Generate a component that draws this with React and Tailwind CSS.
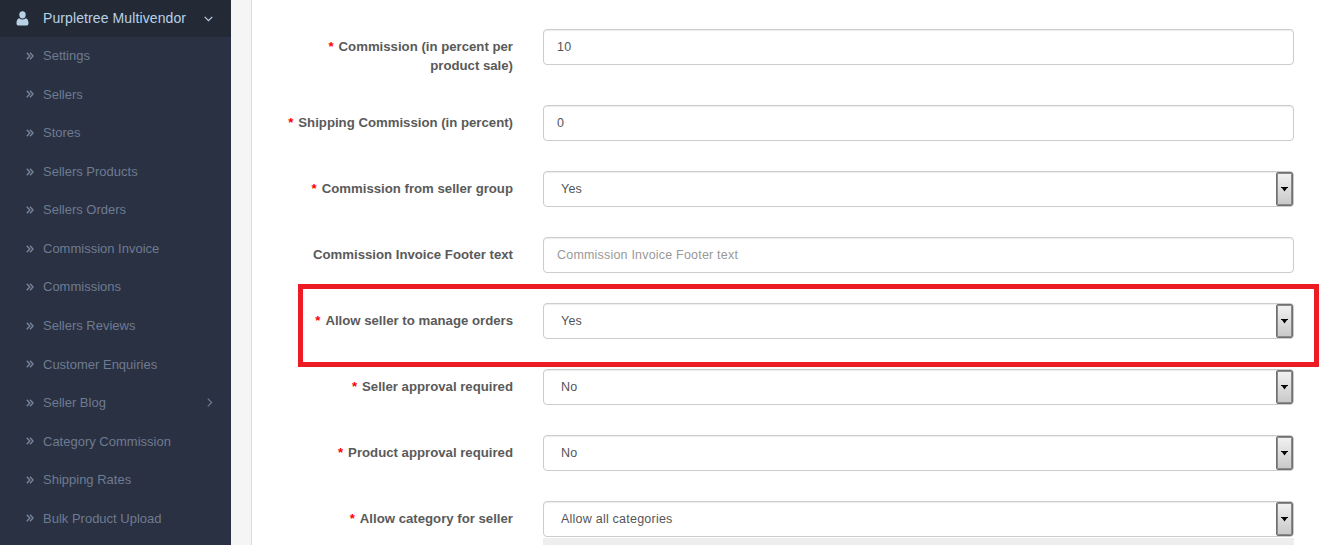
const menuItems = [
  'Settings',
  'Sellers',
  'Stores',
  'Sellers Products',
  'Sellers Orders',
  'Commission Invoice',
  'Commissions',
  'Sellers Reviews',
  'Customer Enquiries',
  'Seller Blog',
  'Category Commission',
  'Shipping Rates',
  'Bulk Product Upload',
];

function UserIcon() {
  return (
    <svg width="13" height="15" viewBox="0 0 13 15" className="text-[#b9d2e6]" fill="currentColor">
      <ellipse cx="6.5" cy="3.8" rx="3.2" ry="3.6" />
      <path d="M0.5 12.2C0.5 9.4 1.6 7.6 3.3 7.2C4.2 8 5.3 8.4 6.5 8.4C7.7 8.4 8.8 8 9.7 7.2C11.4 7.6 12.5 9.4 12.5 12.2C12.5 13.7 11.6 14.5 10.4 14.5H2.6C1.4 14.5 0.5 13.7 0.5 12.2Z" />
    </svg>
  );
}

function DoubleAngle() {
  return (
    <svg width="8" height="8" viewBox="0 0 8 8" fill="none" stroke="#76849b" strokeWidth="1.4" className="shrink-0">
      <path d="M0.8 0.8L3.8 4L0.8 7.2" />
      <path d="M4 0.8L7 4L4 7.2" />
    </svg>
  );
}

function Sidebar() {
  return (
    <aside className="w-[231px] shrink-0 bg-[#2a3142]">
      <div className="h-[37px] bg-[#232a36] flex items-center pl-[16px] text-[14px] tracking-[0.1px] text-[#b9d2e6]">
        <UserIcon />
        <span className="ml-[14px]">Purpletree Multivendor</span>
        <svg width="9" height="6" viewBox="0 0 9 6" fill="none" stroke="#b9d2e6" strokeWidth="1.2" className="ml-[18px]">
          <path d="M0.7 0.8L4.5 4.6L8.3 0.8" />
        </svg>
      </div>
      <ul className="-mt-[0.4px]">
        {menuItems.map((item) => (
          <li key={item} className="h-[38.55px] flex items-center pl-[26px] pr-[18px] text-[13px] text-[#6e7b91]">
            <DoubleAngle />
            <span className="ml-[9px] flex-1">{item}</span>
            {item === 'Seller Blog' && (
              <svg width="6" height="9" viewBox="0 0 6 9" fill="none" stroke="#6e7b91" strokeWidth="1.2">
                <path d="M0.8 0.7L4.6 4.5L0.8 8.3" />
              </svg>
            )}
          </li>
        ))}
      </ul>
    </aside>
  );
}

function FieldLabel({ required, children }) {
  return (
    <label className="w-[233px] shrink-0 pt-[8px] text-right text-[13.2px] leading-[19px] font-bold text-[#5a5a5a]">
      {required && <span className="text-[#ff0000] mr-[5px]">*</span>}
      {children}
    </label>
  );
}

function Field({ label, required, children, tall }) {
  return (
    <div className={`flex mb-[30px] ${tall ? 'h-[46px]' : 'h-[36px]'}`}>
      <FieldLabel required={required}>{label}</FieldLabel>
      <div className="ml-[30px] flex-1">{children}</div>
    </div>
  );
}

function TextInput({ value, placeholder }) {
  return (
    <input
      readOnly
      value={value}
      placeholder={placeholder}
      className="block w-full h-[36px] px-[13px] border border-[#cccccc] rounded-[4px] bg-white text-[12.5px] text-[#555555] placeholder:text-[#999999] tracking-[0.2px] shadow-[inset_0_1px_1px_rgba(0,0,0,0.075)] outline-none"
    />
  );
}

function SelectBox({ value }) {
  return (
    <div className="relative h-[36px] pl-[17px] flex items-center border border-[#cccccc] rounded-[4px] bg-white text-[12.5px] tracking-[0.23px] text-[#555555] shadow-[inset_0_1px_1px_rgba(0,0,0,0.075)]">
      {value}
      <div className="absolute right-0 top-0 w-[17px] h-[34px] flex items-center justify-center rounded-[2px] border border-[#707070] shadow-[inset_0_0_0_1px_#8a8a8a] bg-gradient-to-b from-[#f2f2f2] to-[#c8c8c8]">
        <svg width="7" height="5" viewBox="0 0 7 5" fill="#000000">
          <path d="M0 0H7V1H6L3.5 4.5L1 1H0Z" />
        </svg>
      </div>
    </div>
  );
}

export default function App() {
  return (
    <div className="relative flex h-[545px] overflow-hidden bg-white font-['Liberation_Sans',Arial,sans-serif]">
      <Sidebar />
      <div className="w-[21px] shrink-0 bg-[#f5f5f5] border-r border-[#dddddd]" />
      <main className="flex-1 pl-[28px] pr-[28px] pt-[29px]">
        <Field tall required label="Commission (in percent per product sale)">
          <TextInput value="10" />
        </Field>
        <Field required label="Shipping Commission (in percent)">
          <TextInput value="0" />
        </Field>
        <Field required label="Commission from seller group">
          <SelectBox value="Yes" />
        </Field>
        <Field label="Commission Invoice Footer text">
          <TextInput value="" placeholder="Commission Invoice Footer text" />
        </Field>
        <Field required label="Allow seller to manage orders">
          <SelectBox value="Yes" />
        </Field>
        <Field required label="Seller approval required">
          <SelectBox value="No" />
        </Field>
        <Field required label="Product approval required">
          <SelectBox value="No" />
        </Field>
        <div className="flex h-[36px]">
          <FieldLabel required>Allow category for seller</FieldLabel>
          <div className="ml-[30px] flex-1">
            <SelectBox value="Allow all categories" />
            <div className="h-[20px] mt-[1px] bg-[#eeeeee]" />
          </div>
        </div>
      </main>
      {/* Red highlight drawn over the screenshot */}
      <div className="absolute left-[298px] top-[284px] w-[1021px] h-[83px] border-[5px] border-[#ed1c24]" />
    </div>
  );
}
